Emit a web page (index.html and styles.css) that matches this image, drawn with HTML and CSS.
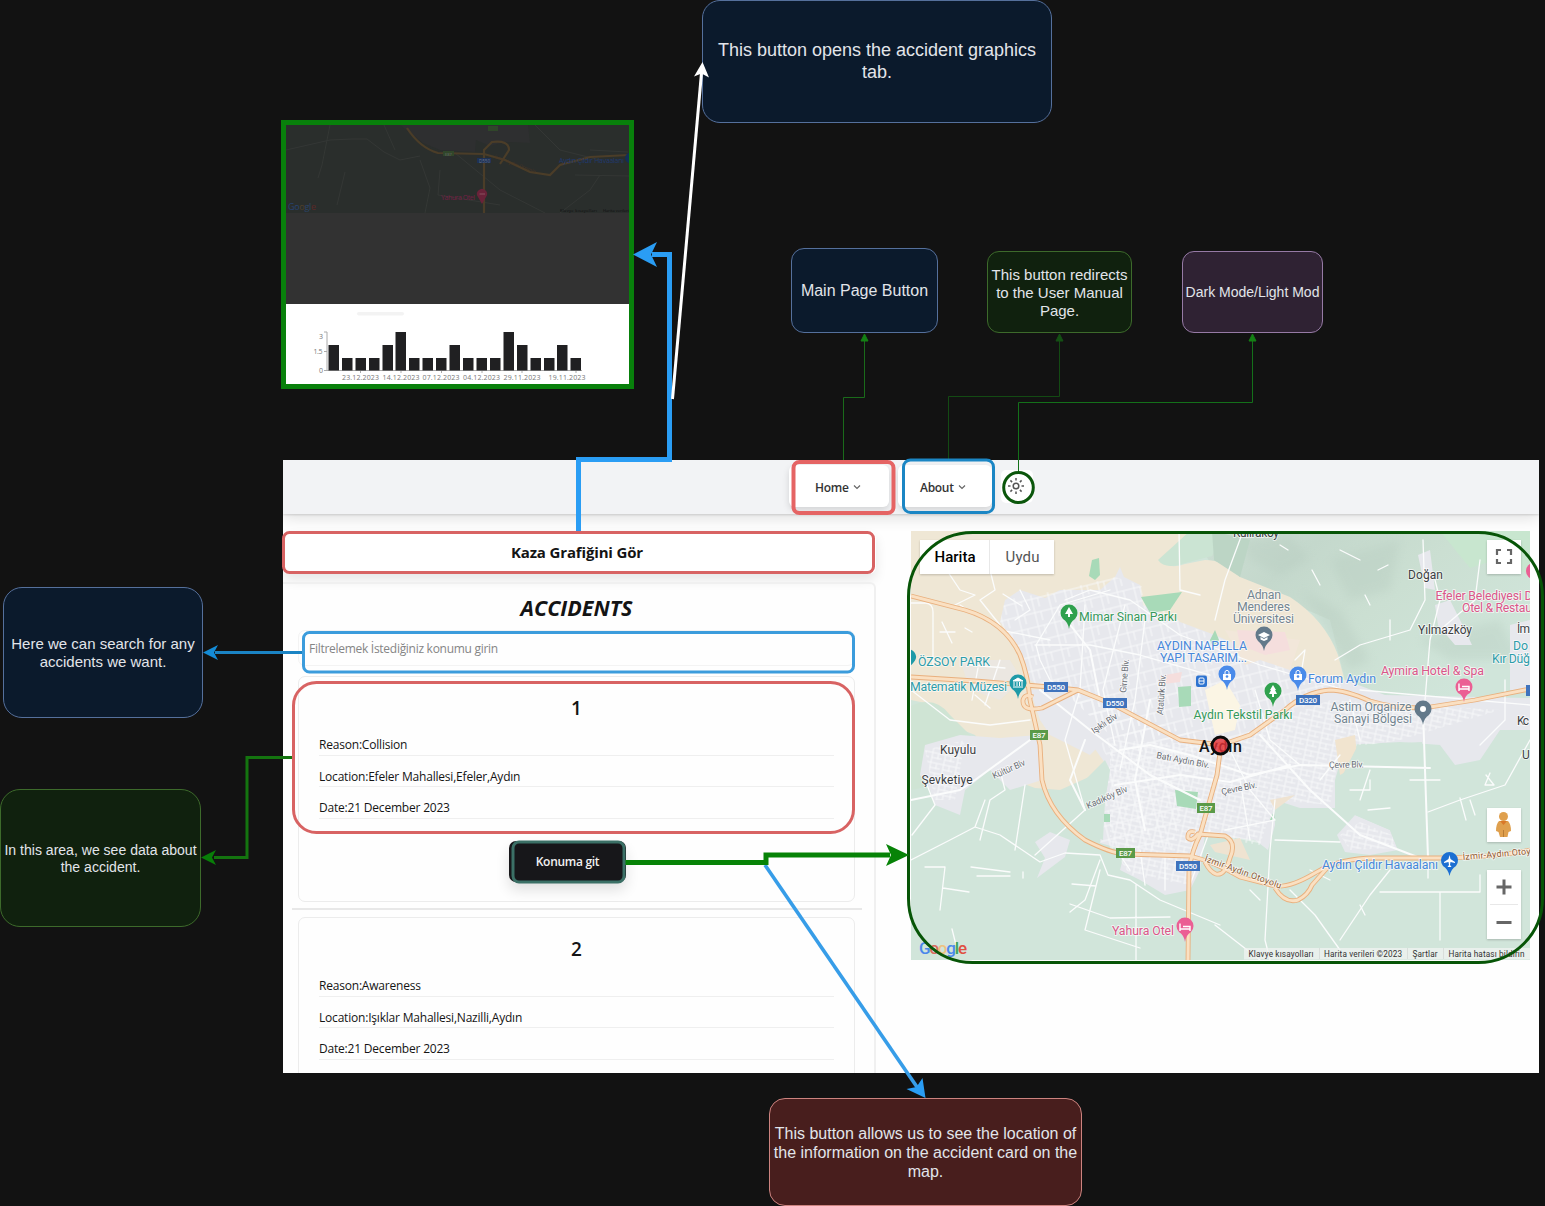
FILE: index.html
```html
<!DOCTYPE html>
<html lang="en">
<head>
<meta charset="utf-8">
<title>User manual diagram</title>
<link rel="stylesheet" href="styles.css">
</head>
<body>
<main class="canvas">

  <section class="preview">
    <svg class="preview-map" viewBox="286 125 343 88" width="343" height="88">
      <rect x="286" y="125" width="343" height="88" fill="#2a2e2c"/>
      <path d="M400 125L423 143L440 150L475 152L476 140L490 146L505 142L530 143L528 125Z" fill="#2e2f30"/>
      <path d="M286 150L330 140L352 139L367 139L384 152L400 160L420 156M384 125L395 150M420 160L430 188L425 213M440 170L438 195L500 205M455 153L500 190L545 213M535 125L560 150L600 160M590 150L628 152M600 175L590 190L560 213M575 175L629 176M330 125L322 165L318 178M345 172L337 205" fill="none" stroke="#343735" stroke-width="1"/>
      <g fill="none" stroke="#4b3d28" stroke-width="2.200">
        <path d="M407 128Q420 148 438 153L484 154L505 160L530 172L550 175L560 165L590 157L629 155"/>
        <path d="M484 213L484 150L492 142Q509 140 509 150L500 164"/>
      </g>
      <rect x="443" y="151" width="11" height="5" fill="#30462a"/><rect x="488" y="126" width="10" height="5" fill="#30462a"/><rect x="477" y="158" width="14" height="5" fill="#1d3156"/>
      <g class="pv-text">
        <text x="445" y="155.500" font-size="4" fill="#6a6a6a">E87</text>
        <text x="479" y="162.500" font-size="4.500" fill="#6a7485">D550</text>
        <text x="559" y="163" font-size="7" textLength="65" fill="#203a70">Aydın Çıldır Havaalanı</text>
        <text x="441" y="200" font-size="7" textLength="34" fill="#751f45">Yahura Otel</text>
        <text x="288" y="210" font-size="9" textLength="28"><tspan fill="#274372">Go</tspan><tspan fill="#50402a">o</tspan><tspan fill="#2a4468">gl</tspan><tspan fill="#5c2928">e</tspan></text>
        <text x="560" y="212" font-size="4" textLength="37" fill="#0c0c0c">Klavye kısayolları</text>
        <text x="603" y="212" font-size="4" textLength="26" fill="#0c0c0c">Harita verileri</text>
        <text x="494" y="158" font-size="4.500" textLength="44" fill="#4a3525" transform="rotate(20 494 158)">İzmir-Aydın Otoyolu</text>
      </g>
      <path d="M482 204L478 197A5 5 0 1 1 486 197Z" fill="#6a2239"/><path d="M479.500 194H485" stroke="#8a5060"/>
      <circle cx="630" cy="158" r="5" fill="#142f55"/>
    </svg>
    <div class="preview-dim"></div>
    <svg class="preview-chart" viewBox="286 304 343 80" width="343" height="80">
      <rect x="357" y="312" width="47" height="3.500" rx="1.700" fill="#f3f3f3"/>
      <path d="M324 332H327V370.500M324 351.500H327M324 370.500H582M360.500 370V373M401 370V373M441.500 370V373M482 370V373M522 370V373M576 370V373" fill="none" stroke="#aaa"/>
      <path d="M328.500 345h10.500v25.500h-10.500zM342 358h10.500v12.500h-10.500zM355.500 358h10.500v12.500h-10.500zM369 358h10.500v12.500h-10.500zM382.500 345h10.500v25.500h-10.500zM395.500 332h10.500v38.500h-10.500zM409 358h10.500v12.500h-10.500zM422.500 358h10.500v12.500h-10.500zM436 358h10.500v12.500h-10.500zM449.500 345h10.500v25.500h-10.500zM463 358h10.500v12.500h-10.500zM476.500 358h10.500v12.500h-10.500zM490 358h10.500v12.500h-10.500zM503.500 332h10.500v38.500h-10.500zM517 345h10.500v25.500h-10.500zM530.500 358h10.500v12.500h-10.500zM544 358h10.500v12.500h-10.500zM557 345h10.500v25.500h-10.500zM570.500 358h10.500v12.500h-10.500z" fill="#202022"/>
      <g class="chart-text">
        <text x="319" y="339">3</text><text x="313.500" y="354" textLength="9">1.5</text><text x="319" y="373">0</text>
        <text x="342" y="380" textLength="37">23.12.2023</text><text x="382.500" y="380" textLength="37">14.12.2023</text>
        <text x="422.500" y="380" textLength="37">07.12.2023</text><text x="463" y="380" textLength="37">04.12.2023</text>
        <text x="503.500" y="380" textLength="37">29.11.2023</text><text x="548.500" y="380" textLength="37">19.11.2023</text>
      </g>
    </svg>
  </section>

  <section class="app">
    <header class="nav">
      <a class="nav-item nav-home"><span>Home</span><svg width="8" height="8" viewBox="0 0 8 8"><path d="M1 2.500L4 5.500L7 2.500"/></svg></a>
      <a class="nav-item nav-about"><span>About</span><svg width="8" height="8" viewBox="0 0 8 8"><path d="M1 2.500L4 5.500L7 2.500"/></svg></a>
      <a class="nav-theme"><svg width="18" height="18" viewBox="0 0 18 18"><circle cx="9" cy="9" r="2.800"/><path d="M9 1V3.500M9 14.500V17M1 9H3.500M14.500 9H17M3.400 3.400L5.100 5.100M12.900 12.900L14.600 14.600M3.400 14.600L5.100 12.900M12.900 5.100L14.600 3.400"/></svg></a>
    </header>
    <div class="content">
      <div class="left">
        <a class="chart-button"><span>Kaza Grafiğini Gör</span></a>
        <div class="panel">
          <h1>ACCIDENTS</h1>
          <div class="search"><span>Filtrelemek İstediğiniz konumu girin</span></div>
          <article class="card">
            <h2>1</h2>
            <p>Reason:Collision</p>
            <p>Location:Efeler Mahallesi,Efeler,Aydın</p>
            <p>Date:21 December 2023</p>
            <a class="go"><span>Konuma git</span></a>
          </article>
          <hr>
          <article class="card">
            <h2>2</h2>
            <p>Reason:Awareness</p>
            <p>Location:Işıklar Mahallesi,Nazilli,Aydın</p>
            <p>Date:21 December 2023</p>
          </article>
        </div>
      </div>
      <svg class="map" viewBox="911 531 619 429" width="619" height="429">
        <defs>
          <pattern id="streets" width="13" height="10" patternUnits="userSpaceOnUse" patternTransform="rotate(12)"><path d="M0 2H13M3 0V10M9 2V8M3 7H13" stroke="#f8f9fb" stroke-width=".9" fill="none"/></pattern>
          <pattern id="streets2" width="17" height="14" patternUnits="userSpaceOnUse" patternTransform="rotate(-14)"><path d="M0 5H17M6 0V14M12 5V14" stroke="#f8f9fb" stroke-width=".9" fill="none"/></pattern>
          <linearGradient id="hill" x1="0" y1="0" x2="1" y2=".6"><stop offset="0" stop-color="#cfe0d5"/><stop offset=".3" stop-color="#c4d8cc"/><stop offset=".6" stop-color="#cbdfd2"/><stop offset="1" stop-color="#d0e5da"/></linearGradient>
          <filter id="soft"><feGaussianBlur stdDeviation="5"/></filter>
        </defs>
        <rect x="911" y="531" width="619" height="429" fill="#d1e5da"/>
        <path d="M1190 531H1530V700H1350L1330 620L1215 570Z" fill="url(#hill)"/>
        <g filter="url(#soft)" fill="#b5cabe" opacity=".35"><path d="M1240 540L1290 535L1310 560L1280 575L1250 560Z"/><path d="M1330 560L1400 540L1390 590L1350 600Z"/><path d="M1300 590L1340 610L1370 660L1350 670Z"/><path d="M1420 640L1500 620L1520 660L1450 660Z"/></g>
        <path d="M1440 531H1530V575L1495 560L1470 568Z" fill="#c8e6cf"/>
        <path d="M911 531H1190L1162 560Q1168 570 1185 564L1205 560Q1225 560 1240 577L1290 597Q1325 620 1338 655L1345 682L1300 700L1100 700L1105 760L1100 772L1060 790L1035 788L1000 775L990 755L975 735L950 725L935 705L911 700Z" fill="#efe7d5"/>
        <path d="M1190 531L1158 560Q1165 570 1185 563L1212 556L1226 531Z" fill="#cbe4d3"/><path d="M1212 531L1214 560L1240 577L1250 540Z" fill="#bcd5c5"/>
        <path d="M911 706Q935 695 950 715L975 740L988 765L960 780L911 790Z" fill="#cfe4d4"/>
        <g fill="#e7e8ed">
          <path d="M1000 622L1005 600L1020 590L1045 598L1060 590L1100 590L1115 577L1120 567L1124 577L1140 585L1143 605L1180 622L1215 635L1260 655L1300 672L1345 680L1385 695L1530 698V730H1500L1480 760L1455 765L1440 745L1400 742L1345 745L1335 780V808L1300 808L1275 800V825L1268 850L1255 840L1205 835L1200 870L1190 890L1165 895L1140 880L1120 870L1125 850L1100 843L1105 800L1110 770L1060 700L1030 680L1018 645Z"/>
          <path d="M925 745L960 735L1000 738L1038 735L1042 780L1010 790L990 770L965 790L960 815L935 805L930 790L920 775Z"/>
          <path d="M1035 842L1050 832L1070 840L1065 857L1045 872L1037 878L1045 858Z"/>
          <path d="M1337 835L1355 815L1390 830L1398 850L1370 855L1345 852Z"/>
          <path d="M1418 555L1430 550L1435 590L1425 588ZM1435 605L1450 600L1465 630L1472 645L1455 645L1438 625ZM1510 625L1530 620V690H1510Z"/>
          <path d="M960 660L1010 660L1022 680L1000 700L970 690Z" opacity=".5"/>
        </g>
        <path d="M1000 622L1005 600L1060 590L1115 577L1140 585L1180 622L1260 655L1345 685L1280 720L1215 745L1110 735L1050 710Z" fill="url(#streets2)"/>
        <path d="M1110 740L1215 745L1330 700L1500 710L1400 740L1340 750L1330 805L1275 800L1260 845L1200 835L1190 885L1130 875L1110 845Z" fill="url(#streets)"/>
        <path d="M1060 690L1110 760L1100 850L1170 850L1210 740Z" fill="url(#streets2)"/>
        <path d="M925 750L965 740L955 800L935 800ZM1340 835L1360 822L1392 835L1395 848L1350 850Z" fill="url(#streets)"/>
        <path d="M1225 630L1300 640L1290 670L1260 660L1245 665Z" fill="#f2e7da"/><path d="M1237 630L1285 632L1290 650L1265 655L1240 645ZM1165 675L1182 672L1180 682L1164 684Z" fill="#f5dedd"/>
        <path d="M1205 690L1225 680L1240 705L1235 730L1215 735Z" fill="#fbf5e4"/><path d="M1335 740L1355 735L1358 765L1340 775Z" fill="#f1e4cf"/>
        <path d="M1210 845L1240 838L1250 860L1215 852ZM1270 800L1295 795L1275 810Z" fill="#efe3d1"/>
        <path d="M1030 690L1060 688L1110 735L1090 755L1050 735L1040 720Z" fill="#e7e8ed"/>
        <path d="M1044 795L1080 785L1105 760L1110 770L1105 800L1103 840L1080 830Z" fill="#d1e5da"/>
        <path d="M1358 745L1422 742V855L1398 850L1390 830L1355 815L1336 800L1340 780Z" fill="#d1e5da"/>
        <g fill="#a8dab8"><path d="M1092 560L1099 558L1100 575L1095 580L1089 576Z"/><path d="M1141 597L1182 592L1170 610L1150 613Z"/><path d="M1178 687L1191 686V706L1179 707Z"/><path d="M1175 790L1198 792L1196 809L1177 806Z"/><path d="M1104 814h6v8h-6zM1270 820l4-9 1 10zM1210 640l5-10 4 10-6 7zM1213 805l2 8h-5z"/></g>
        <g fill="none" stroke="#fbfcfc" stroke-width="1.300" stroke-linecap="round" stroke-linejoin="round">
          <path d="M1179 531L1180 590L1200 595M1242 534L1225 580L1215 620M1110 590L1060 605L1036 645L1040 660L1050 680L1065 690M1035 645H1090L1140 655L1210 675M1065 600L1090 590L1130 600L1180 635L1260 665L1345 690M1125 605L1103 690L1115 745M1085 605L1080 690L1065 740L1085 810M1145 620L1135 700L1120 770"/>
          <path d="M1000 630L1050 640M940 560L960 590L975 595L955 605M990 570L995 590L980 600M911 603H926Q933 604 933 612V665M942 622L952 643M960 605L968 610M980 600L1000 625M911 690L950 720L990 725L1030 720M1000 660L985 705M960 555L975 550M1020 590L1030 610L1015 620M970 665L1005 668M975 695L990 708M978 668L972 700M1003 594L1022 606M940 632H955M972 632L965 628"/>
          <path stroke-width="2" d="M1030 740L975 780L960 790L911 800M1085 740L1070 780L1085 810M1120 750L1150 745L1190 755L1250 775L1300 765L1430 768M1115 785L1180 775L1230 782L1290 765M1260 735L1310 790L1360 835L1420 858M1423 710L1425 770L1428 858M1150 700L1135 780L1145 830M1040 690L1090 730L1150 775L1200 800M1060 612L1090 650L1100 700"/>
          <path d="M911 860L950 840L975 827L1000 835L1040 862L1065 853L1100 855L1108 875L1130 880L1160 900L1220 925M975 827L985 800M1000 770L1005 790L990 800L980 840M1025 785L1015 850M1085 810L1035 855M925 780L935 805L912 835M925 867H945L940 910M943 888L969 892M971 867L1010 872M977 876L1010 876M1100 860L1085 900L1070 912M1070 904L1110 918L1170 917M1100 870L1085 930L1140 948M1136 885V960M952 929L956 945M1072 884L1096 886M1023 872V878"/>
          <path d="M1275 800L1270 850L1265 940L1270 960M1290 890L1315 915L1340 950M1215 925L1260 960M1275 840L1340 842M1390 870L1370 895L1340 940M1380 892H1480V875M1440 893V940M1428 858V878M1425 770M1428 812L1460 800L1505 785L1530 740M1410 780H1440M1466 820L1460 798"/>
          <path d="M1423 540L1425 600L1410 630L1360 645L1335 660M1435 580L1440 600L1430 640L1425 700M1480 560L1475 600L1440 630M1340 550L1360 560M1280 545L1288 550M1312 570L1320 585M1295 660L1305 650L1300 680M1390 620V640M1360 690L1530 705M1505 680V720L1480 745M1350 700L1360 740M1365 595L1370 605M1378 570L1388 565"/>
          <path d="M1210 830L1190 885M1140 850L1145 885M1120 855L1130 870M1165 855V890M1225 830L1275 820M1240 780L1250 840M1300 765L1270 740L1255 690M1320 780L1340 755M1230 750L1250 790L1275 820M1500 890L1510 910M1470 800L1475 815M1350 790H1370M1370 770L1360 800M1368 810L1390 808M1370 780V790M1486 775L1494 785H1485L1490 773M1310 870L1330 880M1250 890L1260 900M1360 905L1365 915"/>
        </g>
        <g class="highway-edge">
          <path d="M911 596L965 610Q1005 622 1020 655Q1028 675 1030 700L1040 745L1042 780Q1050 815 1085 840Q1110 853 1125 854L1190 856Q1215 862 1240 877L1275 886Q1290 888 1315 873Q1340 858 1375 858L1440 858Q1500 857 1530 850"/>
          <path d="M1188 960L1189 870Q1192 850 1200 835L1217 775L1221 745"/>
          <path d="M911 677L975 681L1050 687L1078 690L1110 703L1180 740L1221 745L1250 735L1285 710Q1305 692 1330 690Q1345 690 1370 701Q1400 710 1430 707L1475 700L1530 689"/>
          <path d="M1078 690L1042 708Q1022 712 1023 700Q1025 693 1033 697M1195 832Q1187 830 1188 838Q1192 842 1198 834L1225 836Q1237 842 1230 858Q1225 876 1216 874Q1210 872 1205 862M1275 888Q1285 904 1298 900Q1308 895 1312 885L1328 867"/>
        </g>
        <g class="highway">
          <path d="M911 596L965 610Q1005 622 1020 655Q1028 675 1030 700L1040 745L1042 780Q1050 815 1085 840Q1110 853 1125 854L1190 856Q1215 862 1240 877L1275 886Q1290 888 1315 873Q1340 858 1375 858L1440 858Q1500 857 1530 850"/>
          <path d="M1188 960L1189 870Q1192 850 1200 835L1217 775L1221 745"/>
          <path d="M911 677L975 681L1050 687L1078 690L1110 703L1180 740L1221 745L1250 735L1285 710Q1305 692 1330 690Q1345 690 1370 701Q1400 710 1430 707L1475 700L1530 689"/>
          <path d="M1078 690L1042 708Q1022 712 1023 700Q1025 693 1033 697M1195 832Q1187 830 1188 838Q1192 842 1198 834L1225 836Q1237 842 1230 858Q1225 876 1216 874Q1210 872 1205 862M1275 888Q1285 904 1298 900Q1308 895 1312 885L1328 867"/>
        </g>
        <g fill="#3f73bd"><rect x="1044" y="682" width="24" height="10"/><rect x="1103" y="698" width="24" height="10"/><rect x="1296" y="695" width="24" height="10"/><rect x="1176" y="861" width="24" height="10"/><rect x="1526" y="685" width="8" height="11"/></g>
        <g fill="#5a9a48"><rect x="1030" y="730" width="18" height="10"/><rect x="1197" y="803" width="18" height="10"/><rect x="1116" y="848" width="19" height="10"/></g>
        <g class="shield"><text x="1047" y="690" textLength="18">D550</text><text x="1106" y="706" textLength="18">D550</text><text x="1299" y="703" textLength="18">D320</text><text x="1179" y="869" textLength="18">D550</text><text x="1032.500" y="738" textLength="13">E87</text><text x="1199.500" y="811" textLength="13">E87</text><text x="1119" y="856" textLength="13">E87</text></g>

        <g fill="#1e9aa8"><path d="M1018 699Q1017 692 1012 689A8.500 8.500 0 1 1 1024 689Q1019 692 1018 699Z"/><path d="M909 667Q917 660 916 656Q915 650 908 649Z"/></g>
        <path d="M1013 681L1018 678L1023 681ZM1014 682V686M1017 682V686M1019.500 682V686M1022 682V686M1013 687H1023" stroke="#fff" stroke-width="1" fill="#fff"/>
        <g fill="#30a14e"><path d="M1069 629Q1068 622 1063 619A8.500 8.500 0 1 1 1075 619Q1070 622 1069 629Z"/><path d="M1273 707Q1272 700 1267 697A8.500 8.500 0 1 1 1279 697Q1274 700 1273 707Z"/></g>
        <path d="M1069 607L1073 614H1070V617H1068V614H1065ZM1273 685L1276 690H1275L1277 694H1274V697H1272V694H1269L1271 690H1270Z" fill="#fff"/>
        <g fill="#4a8bea"><path d="M1227 690Q1226 683 1221 680A8.500 8.500 0 1 1 1233 680Q1228 683 1227 690Z"/><path d="M1298 691Q1297 684 1292 681A8.500 8.500 0 1 1 1304 681Q1299 684 1298 691Z"/></g>
        <path d="M1223 674H1231V680H1223ZM1294 674H1302V680H1294Z" fill="#fff"/><path d="M1225 674V671.500Q1227 669 1229 671.500V674M1296 674V671.500Q1298 669 1300 671.500V674" fill="none" stroke="#fff"/><circle cx="1227" cy="676.500" r="1.300" fill="#4a8bea"/><circle cx="1298" cy="676.500" r="1.300" fill="#4a8bea"/>
        <g fill="#63798a"><path d="M1264 651Q1263 645 1258 641A8.500 8.500 0 1 1 1270 641Q1265 645 1264 651Z"/><path d="M1423 725Q1422 718 1417 715A8.500 8.500 0 1 1 1429 715Q1424 718 1423 725Z"/></g>
        <path d="M1258 635L1264 632L1270 635L1264 638ZM1260.500 637V639.500L1264 641L1267.500 639.500V637L1264 639Z" fill="#fff"/><circle cx="1423" cy="709" r="3" fill="#fff"/>
        <g fill="#eb5f94"><path d="M1464 702Q1463 695 1458 693A8.500 8.500 0 1 1 1470 693Q1465 695 1464 702Z"/><path d="M1185 942Q1184 935 1179 932A8.500 8.500 0 1 1 1191 932Q1186 935 1185 942Z"/><circle cx="1534" cy="571" r="8"/></g>
        <path d="M1459 683.500V691M1459 689H1469V691M1462 686.500H1469V689M1180 923.500V931M1180 929H1190V931M1183 926.500H1190V929" fill="none" stroke="#fff" stroke-width="1.400"/>
        <path d="M1449.500 876Q1448 869 1443 866A8.500 8.500 0 1 1 1456 866Q1451 869 1449.500 876Z" fill="#1c6fd2"/><path d="M1449.500 855L1450.500 859L1455 862V863L1450.500 862L1450 865L1451.500 867H1447.500L1449 865L1448.500 862L1444 863V862L1448.500 859Z" fill="#fff"/>
        <rect x="1196" y="675.500" width="11" height="11.500" rx="2" fill="#2d73d0"/><rect x="1199" y="678" width="5" height="6" rx="1" fill="none" stroke="#fff"/><path d="M1199 681H1204" stroke="#fff"/>

        <g class="place">
          <text x="1233" y="536.500" textLength="46">Kuliraköy</text><text x="1408" y="579" textLength="35">Doğan</text><text x="1418" y="634" textLength="54">Yılmazköy</text><text x="1517" y="633" textLength="13">İm</text><text x="1517" y="725" textLength="12">Kc</text><text x="1522" y="759">U</text><text x="940" y="753.500" textLength="36">Kuyulu</text><text x="921.500" y="784" textLength="51">Şevketiye</text>
        </g>
        <g class="poi">
          <g fill="#36995b"><text x="1079" y="621" textLength="98">Mimar Sinan Parkı</text><text x="1193.500" y="719" textLength="99">Aydın Tekstil Parkı</text></g>
          <g fill="#4687da"><text x="1157" y="650" textLength="90">AYDIN NAPELLA</text><text x="1160" y="662" textLength="87">YAPI TASARIM...</text><text x="1308" y="683" textLength="68">Forum Aydın</text><text x="1322" y="869" textLength="116">Aydın Çıldır Havaalanı</text></g>
          <g fill="#2e9caa"><text x="918" y="666" textLength="72">ÖZSOY PARK</text><text x="910" y="691" textLength="97">Matematik Müzesi</text><text x="1513" y="650" textLength="15">Do</text><text x="1492" y="662.500" textLength="38">Kır Düğ</text></g>
          <g fill="#738591"><text x="1247" y="599" textLength="34">Adnan</text><text x="1237" y="611" textLength="53">Menderes</text><text x="1233" y="623" textLength="61">Üniversitesi</text><text x="1330.500" y="711" textLength="81">Astim Organize</text><text x="1334" y="723" textLength="78">Sanayi Bölgesi</text></g>
          <g fill="#db5689"><text x="1435.500" y="600" textLength="97">Efeler Belediyesi D</text><text x="1462" y="611.500" textLength="70">Otel &amp; Restau</text><text x="1381" y="675" textLength="103">Aymira Hotel &amp; Spa</text><text x="1112" y="934.500" textLength="62">Yahura Otel</text></g>
        </g>
        <g class="street">
          <text transform="translate(1126 693) rotate(-85)" textLength="34">Girne Blv.</text><text transform="translate(1163 715) rotate(-86)" textLength="41">Atatürk Blv.</text><text transform="translate(1094 734) rotate(-34)" textLength="29">Işıklı Blv</text><text transform="translate(994 779) rotate(-24)" textLength="35">Kültür Blv</text><text transform="translate(1088 809) rotate(-24)" textLength="44">Kadıköy Blv</text><text transform="translate(1156 758) rotate(11)" textLength="54">Batı Aydın Blv.</text><text transform="translate(1222 795) rotate(-12)" textLength="36">Çevre Blv.</text><text transform="translate(1329 768) rotate(-1)" textLength="35">Çevre Blv.</text>
          <text class="hw" transform="translate(1204 861) rotate(20)" textLength="81">İzmir-Aydın Otoyolu</text><text class="hw" transform="translate(1463 860) rotate(-5)" textLength="68">İzmir-Aydın Otoy</text>
        </g>
        <text class="city" x="1199" y="751.500" textLength="43">Aydın</text>
        <circle cx="1220.500" cy="745.500" r="8.500" fill="#e23038" fill-opacity=".8" stroke="#0a0a0a" stroke-width="2.800"/>

        <g class="ctl" fill="#fff"><rect x="920" y="540" width="134" height="34"/><rect x="1487" y="540" width="34" height="34"/><rect x="1487" y="808" width="34" height="34"/><rect x="1487" y="870" width="34" height="69"/></g>
        <path d="M989.500 540V574M1490 904.500H1518" stroke="#e8e8e8"/>
        <text class="type on" x="934.500" y="561.500" textLength="41">Harita</text><text class="type" x="1005.500" y="561.500" textLength="34">Uydu</text>
        <path d="M1497 555V550H1501M1507 550H1511V555M1511 559V563H1507M1501 563H1497V559" fill="none" stroke="#666" stroke-width="2.200"/>
        <path d="M1504 879.500V894.500M1496.500 887H1511.500M1496.500 922.500H1511.500" stroke="#666" stroke-width="3"/>
        <g fill="#dfa04e"><circle cx="1503.500" cy="816.500" r="4.500"/><path d="M1499 821H1508Q1511 824 1511 831L1508.500 832L1507.500 837H1500L1498.500 832L1496 831Q1496 824 1499 821Z"/></g><path d="M1500 821L1503.500 825L1507 821Z" fill="#d97828"/><path d="M1503.500 830V837" stroke="#b87d35"/>
        <rect x="1244" y="948" width="286" height="11.500" fill="#f0f3f1" opacity=".75"/><path d="M1319.500 948V959M1407.500 948V959M1443.500 948V959" stroke="#d9dedb"/>
        <g class="legal"><text x="1248.500" y="957" textLength="65">Klavye kısayolları</text><text x="1324" y="957" textLength="78">Harita verileri ©2023</text><text x="1412.500" y="957" textLength="25">Şartlar</text><text x="1448.500" y="957" textLength="76">Harita hatası bildirin</text></g>
        <text class="google" x="919" y="953.500" textLength="48"><tspan fill="#4b88ea">G</tspan><tspan fill="#d96a5e">o</tspan><tspan fill="#eec281">o</tspan><tspan fill="#4b88ea">g</tspan><tspan fill="#3ba55a">l</tspan><tspan fill="#e04f42">e</tspan></text>
      </svg>
    </div>
  </section>

  <div class="note blue n-graphics"><p>This button opens the accident graphics<br>tab.</p></div>
  <div class="note blue n-main"><p>Main Page Button</p></div>
  <div class="note green n-manual"><p>This button redirects<br>to the User Manual<br>Page.</p></div>
  <div class="note purple n-mode"><p>Dark Mode/Light Mod</p></div>
  <div class="note blue n-search"><p>Here we can search for any<br>accidents we want.</p></div>
  <div class="note green n-data"><p>In this area, we see data about<br>the accident.</p></div>
  <div class="note red n-locate"><p>This button allows us to see the location of<br>the information on the accident card on the<br>map.</p></div>

  <svg class="connectors" viewBox="0 0 1545 1206" width="1545" height="1206">
    <g fill="none">
      <path d="M578.500 532V459.500H669.500V254.500H652" stroke="#2a9df4" stroke-width="5"/>
      <path d="M672.500 399L701.500 73" stroke="#fff" stroke-width="3"/>
      <path d="M302 652.500H215" stroke="#1b84c4" stroke-width="3"/>
      <path d="M293 757.500H247V857.500H214" stroke="#14740f" stroke-width="3"/>
      <path d="M843.500 461V397.500H864.500V340" stroke="#1a6b1a"/>
      <path d="M948.500 460V396.500H1059.500V340" stroke="#134a13"/>
      <path d="M1018.500 472V402.500H1252.500V340" stroke="#14701a"/>
      <path d="M765 865L917 1087" stroke="#379de8" stroke-width="3.600"/>
      <path d="M625 862.500H766V855H890" stroke="#078307" stroke-width="5"/>
      <rect x="793.500" y="462" width="100" height="51" rx="6" stroke="#e56464" stroke-width="4"/>
      <rect x="903.500" y="460" width="90" height="52.500" rx="7" stroke="#1b86c4" stroke-width="3"/>
      <ellipse cx="1018.500" cy="487.500" rx="14.800" ry="15" stroke="#0b560b" stroke-width="3"/>
      <rect x="283.500" y="532.500" width="590" height="40" rx="6" stroke="#d86363" stroke-width="3"/>
      <rect x="303.500" y="632.500" width="550" height="39.500" rx="6" stroke="#3b9cdc" stroke-width="3"/>
      <rect x="293.500" y="682.500" width="560" height="150" rx="23" stroke="#d86363" stroke-width="3"/>
      <rect x="513" y="842" width="111" height="40" rx="6" stroke="#3b7066" stroke-width="3"/>
      <rect x="908.500" y="532.500" width="634" height="430" rx="64" stroke="#075507" stroke-width="3"/>
      <rect x="283.500" y="122.500" width="348" height="264" stroke="#08800b" stroke-width="5"/>
    </g>
    <path d="M633 254.500L657 242L651 254.500L657 267Z" fill="#2a9df4"/>
    <path d="M702.500 62L694 76.500L701.500 73.500L709 77.500Z" fill="#fff"/>
    <path d="M203 652.500L218 645L214 652.500L218 660Z" fill="#148bd6"/>
    <path d="M201 857.500L216 850L212 857.500L216 865Z" fill="#087e08"/>
    <path d="M909 855L886 844L891 855L886 866Z" fill="#078307"/>
    <path d="M925.500 1098L922.500 1078L916.500 1087L906.500 1089Z" fill="#2a9df4"/>
    <path d="M864.500 334L868 341H861ZM1252.500 334L1256 341H1249Z" fill="#148014" stroke="#148014"/><path d="M1059.500 334L1063 341H1056Z" fill="#145014" stroke="#145014"/>
  </svg>
</main>
</body>
</html>
```
FILE: styles.css
```css
* { box-sizing: border-box; }
body { margin: 0; background: #121212; }
h1, h2, p { margin: 0; }
svg { display: block; }
.canvas { position: relative; width: 1545px; height: 1206px; overflow: hidden; background: #121212; }

/* annotation notes */
.note { position: absolute; display: flex; align-items: center; justify-content: center; text-align: center; white-space: nowrap; border: 1px solid; font-family: "Liberation Sans", Arial, sans-serif; color: #e2e5ea; }
.blue { background: #0b1a2c; border-color: #55709c; }
.green { background: #10210e; border-color: #3d6a2b; }
.purple { background: #2f2233; border-color: #967aa5; }
.red { background: #481e1d; border-color: #cc837f; }
.n-graphics { left: 702px; top: 0; width: 350px; height: 123px; border-radius: 18px; font-size: 18px; line-height: 22px; padding-bottom: 2px; }
.n-main { left: 791px; top: 248px; width: 147px; height: 85px; border-radius: 13px; font-size: 16px; }
.n-manual { left: 987px; top: 251px; width: 145px; height: 82px; border-radius: 12px; font-size: 15px; line-height: 18px; padding-top: 1px; }
.n-mode { left: 1182px; top: 251px; width: 141px; height: 82px; border-radius: 12px; font-size: 14px; }
.n-search { left: 3px; top: 587px; width: 200px; height: 131px; border-radius: 19px; font-size: 15px; line-height: 18px; }
.n-data { left: 0; top: 789px; width: 201px; height: 138px; border-radius: 20px; font-size: 14.050px; line-height: 17px; padding-top: 2px; }
.n-locate { left: 769px; top: 1098px; width: 313px; height: 108px; border-radius: 16px; font-size: 16px; line-height: 19px; }

/* chart drawer preview */
.preview { position: absolute; left: 286px; top: 125px; width: 343px; height: 259px; display: flex; flex-direction: column; background: #fff; }
.preview-dim { height: 91px; background: #323232; }
.pv-text, .chart-text { font-family: "Open Sans", sans-serif; }
.chart-text { font-size: 7px; fill: #777; }

/* application window */
.app { position: absolute; left: 283px; top: 460px; width: 1256px; height: 613px; overflow: hidden; display: flex; flex-direction: column; background: #fefefe; font-family: "Open Sans", "Noto Sans", sans-serif; color: #141414; }
.nav { height: 54px; flex: none; display: flex; gap: 9px; padding: 5px 0 0 506px; background: #f2f3f5; box-shadow: 0 1px 2px #0002, 0 4px 14px #0000001f; }
.nav-item { display: flex; align-items: center; gap: 4px; height: 42px; border-radius: 6px; background: #fff; box-shadow: 0 3px 7px #0002; padding-top: 2px; font-size: 12px; font-weight: 600; letter-spacing: -.3px; color: #333; }
.nav-item svg { fill: none; stroke: #666; stroke-width: 1.200; }
.nav-home { width: 100px; padding-left: 26px; }
.nav-about { width: 94px; padding-left: 22px; }
.nav-theme { width: 32px; height: 33px; margin: 5px 0 0 0; padding: 7px 0 0 6px; border-radius: 5px; background: #fff; }
.nav-theme svg { fill: none; stroke: #555; stroke-width: 1.500; }
.content { display: flex; gap: 35px; padding-top: 17px; }
.left { width: 593px; display: flex; flex-direction: column; gap: 8px; }
.chart-button { height: 43px; display: flex; align-items: center; justify-content: center; border-radius: 7px; background: #fff; box-shadow: 0 6px 12px #00000018; font-size: 15px; font-weight: 700; letter-spacing: -.15px; padding: 0 5px 2px 0; }
.panel { height: 600px; border: solid #f0f0f0; border-width: 2px 2px 0 0; border-radius: 0 6px 0 0; padding: 8px 19px 0 15px; }
h1 { height: 32px; font-size: 21.500px; line-height: 31px; font-style: italic; font-weight: 700; text-align: center; }
.search { height: 36px; margin: 6px 0 10px; border: 1px solid #f3f3f3; border-radius: 7px; padding: 9px 0 0 10px; font-size: 12px; line-height: 17px; letter-spacing: -.28px; color: #858585; }
.card { height: 226px; border: 1.500px solid #ececec; border-radius: 7px; padding: 16px 20px 0; display: flex; flex-direction: column; }
h2 { height: 31px; font-size: 19px; line-height: 30px; text-align: center; font-weight: 600; }
.card p { height: 31.500px; border-bottom: 1.500px solid #efefef; padding-top: 12px; font-size: 12px; line-height: 17px; font-weight: 500; letter-spacing: -.2px; white-space: nowrap; }
.go { width: 117px; height: 41px; margin: 22px 0 0 190px; border-radius: 7px; background: #17171a; color: #f1f1f1; display: flex; align-items: center; justify-content: center; font-size: 12px; font-weight: 600; letter-spacing: -.3px; box-shadow: 0 8px 14px #0000001f; }
hr { margin: 6px -7px 7px -6px; border: 0; height: 2px; background: #e8e8e8; }

/* map */
.highway-edge path { fill: none; stroke: #e9b07e; stroke-width: 4.800; stroke-linejoin: round; }
.highway path { fill: none; stroke: #fae0c2; stroke-width: 3; stroke-linejoin: round; }
.map text { font-family: Roboto, sans-serif; }
.shield { fill: #fff; font-size: 8px; font-weight: 500; }
.place, .poi, .street { paint-order: stroke; stroke: #fff; stroke-opacity: .65; stroke-width: 1.800px; stroke-linejoin: round; }
.place { fill: #3c4043; font-size: 12px; }
.poi { font-size: 12.300px; }
.street { fill: #6b6f76; font-size: 9px; }
.hw { fill: #8d5b35; }
.city { font-size: 16px; font-weight: 500; fill: #151515; }
.ctl { filter: drop-shadow(0 1px 1px #0003); }
.type { font-size: 15px; fill: #565656; }
.on { font-weight: 500; fill: #000; }
.legal { font-size: 8.200px; fill: #333; }
.google { font-size: 17px; font-weight: 500; }

.connectors { position: absolute; left: 0; top: 0; }
```
